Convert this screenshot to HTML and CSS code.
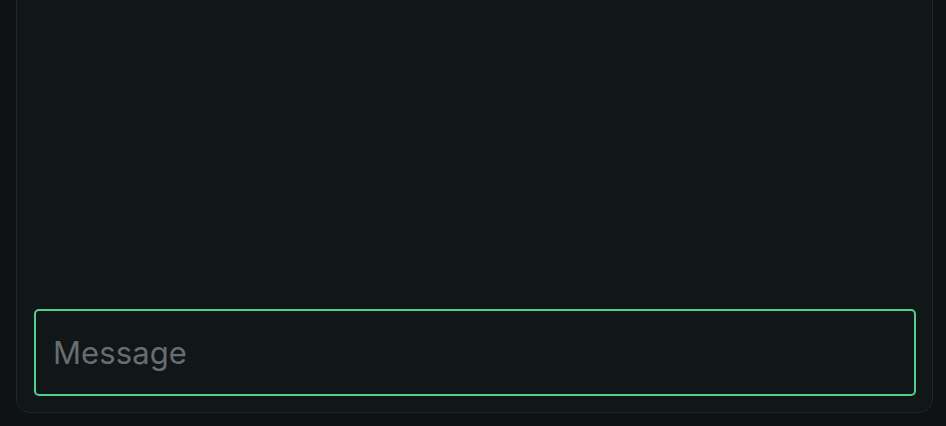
FILE: index.html
```html
<!DOCTYPE html>
<html lang="en">
<head>
<meta charset="utf-8">
<title>Chat</title>
<link rel="stylesheet" href="styles.css">
</head>
<body>
<div class="page">
  <section class="card">
    <div class="messages"></div>
    <form class="composer">
      <input class="message-input" type="text" placeholder="Message">
    </form>
  </section>
</div>
</body>
</html>
```

FILE: styles.css
```css
html, body {
  margin: 0;
  height: 100%;
  background: #0e1214;
}
.page {
  height: 100%;
  box-sizing: border-box;
  padding: 0 13px 13px 16px;
  display: flex;
  flex-direction: column;
}
.card {
  flex: 1;
  display: flex;
  flex-direction: column;
  margin-top: -20px;
  background: #111618;
  border: 1px solid #212629;
  border-radius: 14px;
  padding: 16px 16px 16px 17px;
}
.messages {
  flex: 1;
}
.composer {
  margin: 0;
  display: flex;
}
.message-input {
  flex: 1;
  height: 87px;
  box-sizing: border-box;
  background: #111618;
  border: 2px solid #52cf8a;
  border-radius: 5px;
  padding: 0 17px;
  font-family: Inter, "Noto Sans", sans-serif;
  font-size: 31px;
  letter-spacing: 0.1px;
  color: #d8dcde;
  outline: none;
}
.message-input::placeholder {
  color: #676d70;
}
```
